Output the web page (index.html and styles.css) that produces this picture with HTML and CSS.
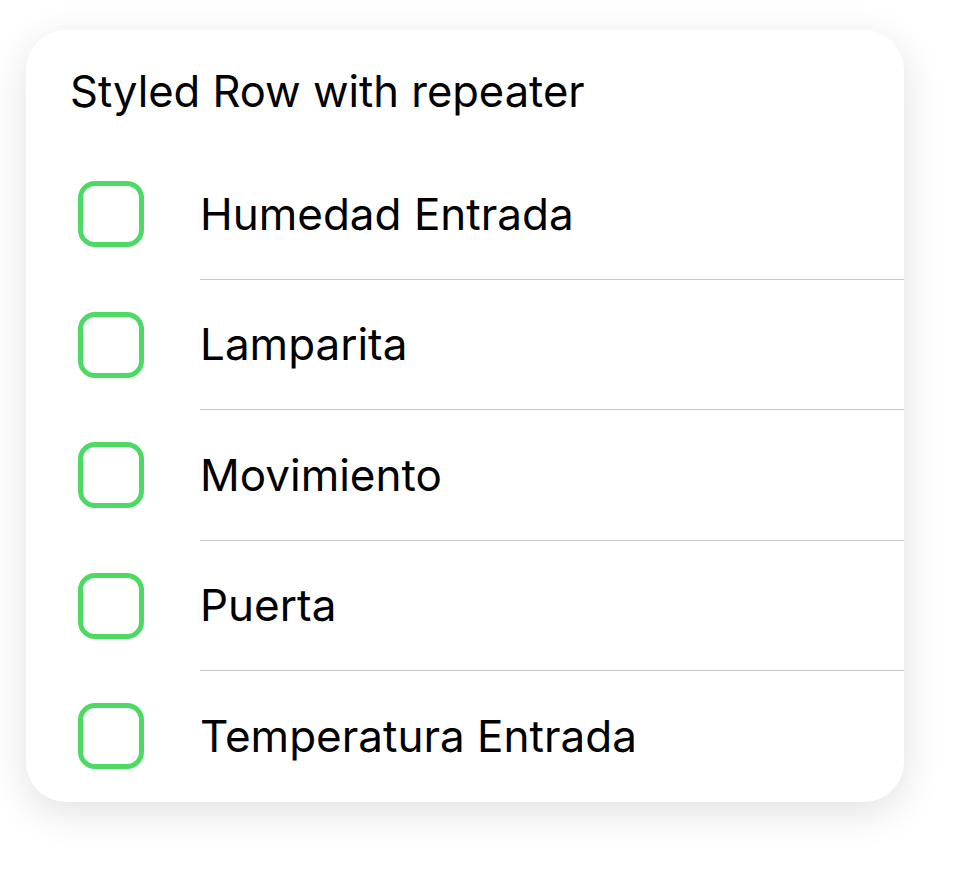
FILE: index.html
```html
<!DOCTYPE html>
<html>
<head>
<meta charset="utf-8">
<link rel="stylesheet" href="styles.css">
</head>
<body>
<div class="card">
  <div class="title">Styled Row with repeater</div>
  <div class="row"><span class="box"></span><span class="label">Humedad Entrada</span></div>
  <div class="row"><span class="box"></span><span class="label">Lamparita</span></div>
  <div class="row"><span class="box"></span><span class="label">Movimiento</span></div>
  <div class="row"><span class="box"></span><span class="label">Puerta</span></div>
  <div class="row last"><span class="box"></span><span class="label">Temperatura Entrada</span></div>
</div>
</body>
</html>
```
FILE: styles.css
```css
html, body {
  margin: 0;
  padding: 0;
  background: #ffffff;
}
body {
  box-sizing: border-box;
  min-height: 882px;
  padding: 30px 64px 80px 26px;
  font-family: Inter, "Noto Sans", sans-serif;
  color: #000;
}
.card {
  background: #fff;
  border-radius: 40px;
  box-shadow: 0 10px 40px rgba(0, 0, 0, 0.12);
  height: 772px;
  overflow: hidden;
}
.title {
  height: 119px;
  box-sizing: border-box;
  padding: 35px 0 0 44px;
  font-size: 43.5px;
  line-height: 52px;
}
.row {
  display: flex;
  align-items: stretch;
  height: 130.5px;
  padding-left: 52px;
}
.box {
  align-self: center;
  width: 66px;
  height: 66px;
  box-sizing: border-box;
  border: 5px solid #4cd964;
  border-radius: 17px;
  flex: none;
}
.label {
  flex: 1;
  margin-left: 56px;
  display: flex;
  align-items: center;
  font-size: 44px;
  border-bottom: 1px solid #c8c8c8;
}
.row.last .label {
  border-bottom: none;
}
```
